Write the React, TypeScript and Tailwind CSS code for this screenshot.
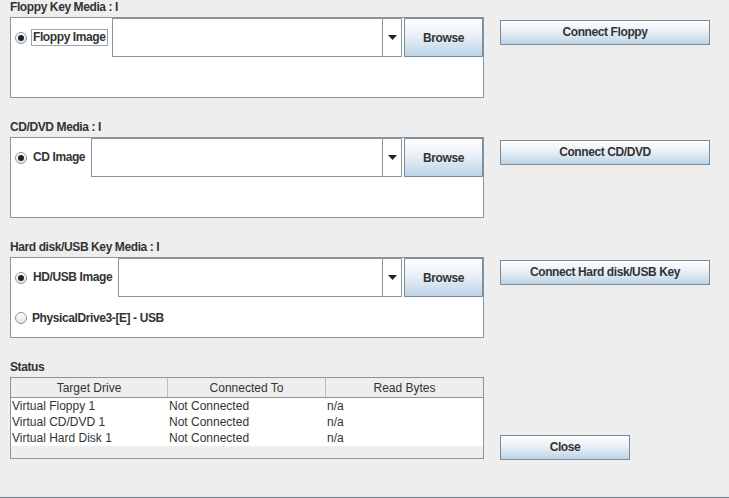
import React from 'react';

const font = { fontFamily: '"Liberation Sans", Arial, sans-serif' };

const ActionButton: React.FC<{ label: string; className?: string }> = ({ label, className = '' }) => (
  <button
    className={`h-[25px] border border-[#7a8a99] bg-gradient-to-b from-white via-[#e6eef5] to-[#bcd3e6] text-[12px] font-bold tracking-[-0.4px] text-[#333333] ${className}`}
  >
    {label}
  </button>
);

const Radio: React.FC<{ checked?: boolean }> = ({ checked }) => (
  <span className="flex h-[12px] w-[12px] items-center justify-center rounded-full border border-[#8a949c] bg-gradient-to-b from-white to-[#dde6ee]">
    {checked && <span className="h-[6px] w-[6px] rounded-full bg-[#222222]" />}
  </span>
);

const ImageCombo: React.FC = () => (
  <div className="flex h-[39px] flex-1">
    <div className="flex-1 border border-[#8a949b] bg-white" />
    <div className="flex w-[19px] items-center justify-center border-y border-r border-[#8a949b] bg-white">
      <svg width="9" height="5" viewBox="0 0 9 5">
        <path d="M0 0h9L4.5 5z" fill="#222" />
      </svg>
    </div>
    <ActionButton label="Browse" className="ml-[2px] h-[39px] w-[79px]" />
  </div>
);

const MediaSection: React.FC<{
  title: string;
  image: string;
  connect: string;
  focused?: boolean;
  physical?: string;
}> = ({ title, image, connect, focused, physical }) => (
  <div className="flex h-[120px]">
    <div className="w-[474px]">
      <div className="h-[17px] text-[12px] font-bold leading-[15px] tracking-[-0.4px] text-[#333333]">{title}</div>
      <div className="h-[81px] border border-[#8a949b] bg-white">
        <div className="flex items-center">
          <div className="flex items-center pl-[4px] pr-[4px]">
            <Radio checked />
            <span
              className={`ml-[4px] px-[1px] text-[12px] font-bold leading-[15px] tracking-[-0.4px] text-[#333333] ${
                focused ? 'border border-[#99a8b5]' : 'border border-transparent'
              }`}
            >
              {image}
            </span>
          </div>
          <ImageCombo />
        </div>
        {physical && (
          <div className="mt-[12px] flex items-center pl-[4px]">
            <Radio />
            <span className="ml-[5px] text-[12px] font-bold tracking-[-0.4px] text-[#333333]">{physical}</span>
          </div>
        )}
      </div>
    </div>
    <div className="ml-[16px] pt-[19px]">
      <ActionButton label={connect} className="w-[210px]" />
    </div>
  </div>
);

const drives = ['Virtual Floppy 1', 'Virtual CD/DVD 1', 'Virtual Hard Disk 1'];

export default function App() {
  return (
    <div className="h-[498px] w-[729px] overflow-hidden bg-[#eeeeee]" style={font}>
      <div className="flex h-[497px] flex-col pl-[10px]">
        <MediaSection title="Floppy Key Media : I" image="Floppy Image" connect="Connect Floppy" focused />
        <MediaSection title="CD/DVD Media : I" image="CD Image" connect="Connect CD/DVD" />
        <MediaSection
          title="Hard disk/USB Key Media : I"
          image="HD/USB Image"
          connect="Connect Hard disk/USB Key"
          physical="PhysicalDrive3-[E] - USB"
        />

        {/* Status table */}
        <div className="flex">
          <div className="w-[474px]">
            <div className="h-[17px] text-[12px] font-bold leading-[15px] tracking-[-0.4px] text-[#333333]">Status</div>
            <div className="h-[82px] border border-[#8a949b] bg-[#eeeeee]">
              <div className="grid h-[20px] grid-cols-[157px_158px_1fr] border-b border-[#8a949b] text-[12px] text-[#333333]">
                <div className="flex items-center justify-center border-r border-[#b8c0c6]">Target Drive</div>
                <div className="flex items-center justify-center border-r border-[#b8c0c6]">Connected To</div>
                <div className="flex items-center justify-center">Read Bytes</div>
              </div>
              <div className="bg-white">
                {drives.map((d) => (
                  <div key={d} className="grid h-[16px] grid-cols-[157px_158px_1fr] text-[12px] leading-[16px] text-[#333333]">
                    <div className="pl-[1px]">{d}</div>
                    <div className="pl-[1px]">Not Connected</div>
                    <div className="pl-[1px]">n/a</div>
                  </div>
                ))}
              </div>
            </div>
          </div>
          <div className="ml-[16px] pt-[74px]">
            <ActionButton label="Close" className="w-[130px]" />
          </div>
        </div>
      </div>
      <div className="h-[1px] bg-[#6e7f8c]" />
    </div>
  );
}
